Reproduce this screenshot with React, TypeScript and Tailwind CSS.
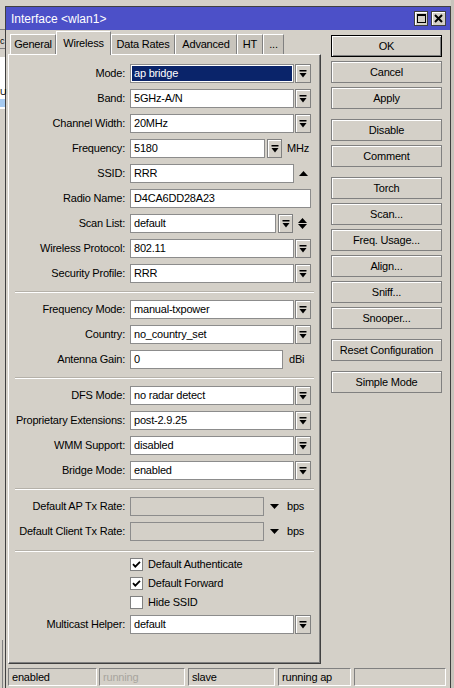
import React from "react";

// MikroTik WinBox "Interface <wlan1>" dialog, Wireless tab

const DropIcon = () => (
  <svg width="8" height="8" viewBox="0 0 8 8" className="block">
    <rect x="0.5" y="0" width="7" height="1.5" fill="#000" />
    <path d="M0.5 3 L7.5 3 L4 7.5 Z" fill="#000" />
  </svg>
);

const DropButton = ({ cls = "w-[16px] ml-[1px]" }: { cls?: string }) => (
  <div
    className={`${cls} h-[19px] shrink-0 flex items-center justify-center bg-[#d4d0c8] border border-[#808080] shadow-[inset_1px_1px_0_#ffffff]`}
  >
    <DropIcon />
  </div>
);

interface FieldProps {
  value?: string;
  cls: string;
  selected?: boolean;
  disabled?: boolean;
}

const Field = ({ value = "", cls, selected, disabled }: FieldProps) => (
  <div
    className={`${cls} h-[19px] shrink-0 border border-[#8c8c8c] flex items-center ${
      disabled ? "bg-[#d4d0c8]" : "bg-white"
    }`}
  >
    {selected ? (
      <div className="h-[15px] ml-[1px] mr-[1px] flex-1 bg-[#0a246a] text-white pl-[2px] leading-[15px]">
        {value}
      </div>
    ) : (
      <span className="pl-[3px] leading-[17px]">{value}</span>
    )}
  </div>
);

const Row = ({ label, children }: { label: string; children: React.ReactNode }) => (
  <div className="flex items-center h-[19px]">
    <div className="w-[121px] pr-[5px] text-right shrink-0 whitespace-nowrap">{label}</div>
    {children}
  </div>
);

const Separator = ({ cls }: { cls: string }) => (
  <div className={`${cls} mx-[6px] h-[2px] border-t border-[#b5b1a9] border-b border-b-white`} />
);

const Check = ({ label, checked }: { label: string; checked?: boolean }) => (
  <div className="flex items-center h-[13px] pl-[121px]">
    <div className="w-[13px] h-[13px] bg-white border border-[#808080] flex items-center justify-center">
      {checked && (
        <svg width="9" height="9" viewBox="0 0 9 9">
          <path d="M1 4.2 L3.3 6.6 L8 1.8" stroke="#000" strokeWidth="1.8" fill="none" />
        </svg>
      )}
    </div>
    <span className="ml-[5px]">{label}</span>
  </div>
);

const SideButton = ({ label, primary, cls = "mt-[4px]" }: { label: string; primary?: boolean; cls?: string }) => (
  <div
    className={`${cls} h-[22px] w-[111px] flex items-center justify-center bg-[#d4d0c8] ${
      primary
        ? "border border-black shadow-[inset_1px_1px_0_#ffffff,inset_-1px_-1px_0_#808080]"
        : "border border-[#808080] shadow-[inset_1px_1px_0_#ffffff]"
    }`}
  >
    {label}
  </div>
);

const tabs = ["General", "Wireless", "Data Rates", "Advanced", "HT", "..."];
const tabWidths: Record<string, string> = {
  General: "w-[46px]",
  Wireless: "w-[55px]",
  "Data Rates": "w-[64px]",
  Advanced: "w-[62px]",
  HT: "w-[26px]",
  "...": "w-[21px]",
};

const StatusCell = ({ text, cls, dim }: { text: string; cls: string; dim?: boolean }) => (
  <div
    className={`${cls} h-[18px] shrink-0 border-t border-l border-[#808080] border-b border-r border-b-white border-r-white flex items-center pl-[3px] ${
      dim ? "text-[#a8a59e]" : "text-black"
    }`}
  >
    {text}
  </div>
);

export default function App() {
  return (
    <div className="relative w-[454px] h-[688px] overflow-hidden bg-[#d4d0c8] font-['Liberation_Sans',Arial,sans-serif] text-[11px] tracking-[-0.2px] text-black">
      {/* window behind, left strip */}
      <div className="absolute left-0 top-[29px] w-[5px] h-px bg-[#808080]" />
      <div className="absolute left-0 top-[36px] text-[9px] leading-[10px]">c</div>
      <div className="absolute left-0 top-[48px] w-[5px] h-px bg-[#808080]" />
      <div className="absolute left-0 top-[57px] w-[5px] h-[52px] bg-white" />
      <div className="absolute left-0 top-[87px] text-[9px] leading-[10px]">U</div>
      <div className="absolute left-0 top-[99px] w-[5px] h-[8px] bg-[#a6caf0]" />
      <div className="absolute left-[2px] top-[640px] w-px h-[48px] bg-[#808080]" />
      <div className="absolute left-[451px] top-0 w-[3px] h-[688px] bg-[#c8c4bc]" />

      {/* window */}
      <div className="ml-[5px] mt-[6px] w-[446px] h-[690px] border border-[#404040] bg-[#d4d0c8]">
        {/* title bar */}
        <div className="h-[23px] bg-[#4c50c8] flex items-center pl-[5px] pr-[4px]">
          <span className="text-white text-[12px] tracking-normal">Interface &lt;wlan1&gt;</span>
          <div className="ml-auto flex gap-[3px]">
            <div className="w-[14px] h-[15px] bg-[#d4d0c8] border border-[#404040] shadow-[inset_1px_1px_0_#ffffff] flex items-center justify-center">
              <div className="w-[9px] h-[9px] border border-black border-t-2" />
            </div>
            <div className="w-[15px] h-[15px] bg-[#d4d0c8] border border-[#404040] shadow-[inset_1px_1px_0_#ffffff] flex items-center justify-center">
              <svg width="9" height="9" viewBox="0 0 9 9">
                <path d="M1 1 L8 8 M8 1 L1 8" stroke="#000" strokeWidth="2" />
              </svg>
            </div>
          </div>
        </div>

        {/* body */}
        <div className="flex pl-[2px]">
          {/* left column */}
          <div className="w-[313px]">
            <div className="flex items-end h-[24px] pl-[2px]">
              {tabs.map((t) =>
                t === "Wireless" ? (
                  <div
                    key={t}
                    className={`${tabWidths[t]} h-[24px] -mb-px relative z-10 bg-[#d4d0c8] border-t border-l border-white border-r border-r-[#808080] flex items-start justify-center pt-[3px]`}
                  >
                    {t}
                  </div>
                ) : (
                  <div
                    key={t}
                    className={`${tabWidths[t]} h-[20px] bg-[#c8c4bc] border-t border-l border-white border-r border-r-[#808080] flex items-center justify-center`}
                  >
                    {t}
                  </div>
                )
              )}
            </div>
            <div className="h-[610px] border-t border-l border-white border-r border-b border-r-[#404040] border-b-[#404040] shadow-[inset_-1px_-1px_0_#808080] pt-[9px]">
              <div className="flex flex-col gap-[6px]">
                <Row label="Mode:">
                  <Field cls="w-[164px]" value="ap bridge" selected />
                  <DropButton />
                </Row>
                <Row label="Band:">
                  <Field cls="w-[164px]" value="5GHz-A/N" />
                  <DropButton />
                </Row>
                <Row label="Channel Width:">
                  <Field cls="w-[164px]" value="20MHz" />
                  <DropButton />
                </Row>
                <Row label="Frequency:">
                  <Field cls="w-[135px]" value="5180" />
                  <DropButton cls="w-[15px] ml-[2px]" />
                  <span className="ml-[5px]">MHz</span>
                </Row>
                <Row label="SSID:">
                  <Field cls="w-[164px]" value="RRR" />
                  <div className="w-[16px] ml-[1px] flex justify-center">
                    <svg width="9" height="5" viewBox="0 0 9 5">
                      <path d="M0 5 L4.5 0 L9 5 Z" fill="#000" />
                    </svg>
                  </div>
                </Row>
                <Row label="Radio Name:">
                  <Field cls="w-[181px]" value="D4CA6DD28A23" />
                </Row>
                <Row label="Scan List:">
                  <Field cls="w-[146px]" value="default" />
                  <DropButton cls="w-[15px] ml-[2px]" />
                  <div className="w-[16px] ml-[1px] flex flex-col items-center gap-[1px]">
                    <svg width="9" height="5" viewBox="0 0 9 5">
                      <path d="M0 5 L4.5 0 L9 5 Z" fill="#000" />
                    </svg>
                    <svg width="9" height="5" viewBox="0 0 9 5">
                      <path d="M0 0 L9 0 L4.5 5 Z" fill="#000" />
                    </svg>
                  </div>
                </Row>
                <Row label="Wireless Protocol:">
                  <Field cls="w-[164px]" value="802.11" />
                  <DropButton />
                </Row>
                <Row label="Security Profile:">
                  <Field cls="w-[164px]" value="RRR" />
                  <DropButton />
                </Row>
              </div>

              <Separator cls="mt-[8px]" />

              <div className="flex flex-col gap-[6px] mt-[7px]">
                <Row label="Frequency Mode:">
                  <Field cls="w-[164px]" value="manual-txpower" />
                  <DropButton />
                </Row>
                <Row label="Country:">
                  <Field cls="w-[164px]" value="no_country_set" />
                  <DropButton />
                </Row>
                <Row label="Antenna Gain:">
                  <Field cls="w-[153px]" value="0" />
                  <span className="ml-[6px]">dBi</span>
                </Row>
              </div>

              <Separator cls="mt-[8px]" />

              <div className="flex flex-col gap-[6px] mt-[7px]">
                <Row label="DFS Mode:">
                  <Field cls="w-[164px]" value="no radar detect" />
                  <DropButton />
                </Row>
                <Row label="Proprietary Extensions:">
                  <Field cls="w-[164px]" value="post-2.9.25" />
                  <DropButton />
                </Row>
                <Row label="WMM Support:">
                  <Field cls="w-[164px]" value="disabled" />
                  <DropButton />
                </Row>
                <Row label="Bridge Mode:">
                  <Field cls="w-[164px]" value="enabled" />
                  <DropButton />
                </Row>
              </div>

              <Separator cls="mt-[8px]" />

              <div className="flex flex-col gap-[6px] mt-[7px]">
                {["Default AP Tx Rate:", "Default Client Tx Rate:"].map((l) => (
                  <Row key={l} label={l}>
                    <Field cls="w-[134px]" disabled />
                    <svg width="9" height="5" viewBox="0 0 9 5" className="ml-[6px]">
                      <path d="M0 0 L9 0 L4.5 5 Z" fill="#000" />
                    </svg>
                    <span className="ml-[8px]">bps</span>
                  </Row>
                ))}
              </div>

              <Separator cls="mt-[9px]" />

              <div className="flex flex-col gap-[6px] mt-[6px]">
                <Check label="Default Authenticate" checked />
                <Check label="Default Forward" checked />
                <Check label="Hide SSID" />
                <Row label="Multicast Helper:">
                  <Field cls="w-[164px]" value="default" />
                  <DropButton />
                </Row>
              </div>
            </div>
          </div>

          {/* right column: buttons */}
          <div className="ml-[10px] pt-[5px] flex flex-col">
            <SideButton label="OK" primary cls="" />
            <SideButton label="Cancel" />
            <SideButton label="Apply" />
            <SideButton label="Disable" cls="mt-[10px]" />
            <SideButton label="Comment" />
            <SideButton label="Torch" cls="mt-[10px]" />
            <SideButton label="Scan..." />
            <SideButton label="Freq. Usage..." />
            <SideButton label="Align..." />
            <SideButton label="Sniff..." />
            <SideButton label="Snooper..." />
            <SideButton label="Reset Configuration" cls="mt-[10px]" />
            <SideButton label="Simple Mode" cls="mt-[10px]" />
          </div>
        </div>

        {/* status bar */}
        <div className="flex mt-[4px] pl-[2px]">
          <StatusCell text="enabled" cls="w-[89px]" />
          <StatusCell text="running" cls="w-[86px] ml-[2px]" dim />
          <StatusCell text="slave" cls="w-[87px] ml-[3px]" />
          <StatusCell text="running ap" cls="w-[73px] ml-[3px]" />
          <StatusCell text="" cls="w-[92px] ml-[3px]" />
        </div>
      </div>
    </div>
  );
}
